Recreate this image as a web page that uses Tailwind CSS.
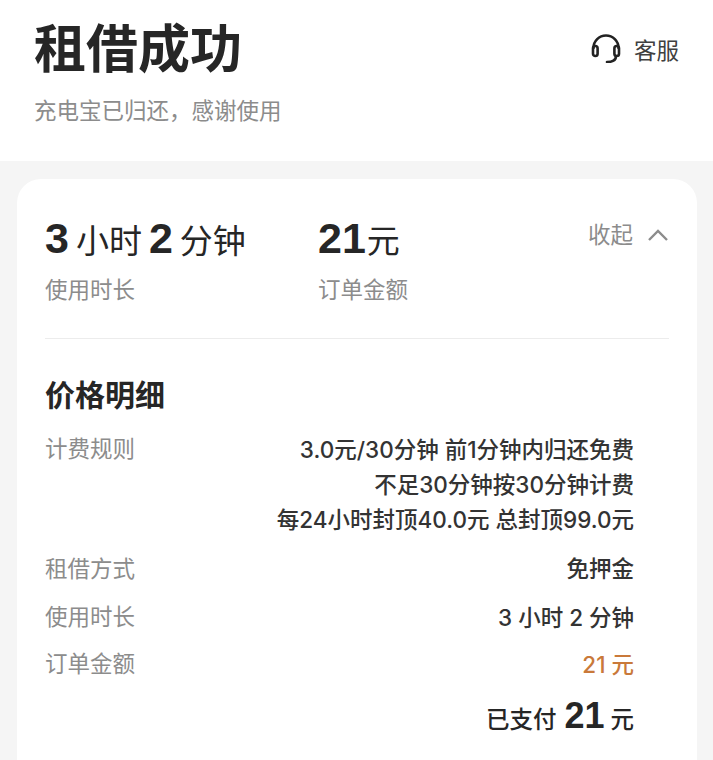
<!DOCTYPE html>
<html lang="zh-CN">
<head>
  <meta charset="UTF-8">
  <title>租借成功</title>
  <script src="https://cdn.jsdelivr.net/npm/@tailwindcss/browser@4"></script>
</head>
<body class="bg-[#f5f5f5] h-[760px] overflow-hidden font-['Liberation_Sans','Noto_Sans_CJK_SC',sans-serif]">
  <div class="bg-white h-[161px] px-[34px] pt-[17px] flex justify-between">
    <div>
      <h1 class="text-[52px] leading-[66px] font-bold text-[#262626]">租借成功</h1>
      <p class="text-[22.5px] leading-[30px] mt-[14px] text-[#8c8c8c]">充电宝已归还，感谢使用</p>
    </div>
    <div class="flex items-start gap-[13px] h-[36px] mt-[16px] text-[22.5px] leading-[38px] text-[#404040]">
      <svg class="w-[30px] h-[30px]" viewBox="0 0 30 30" fill="none" stroke="#222" stroke-width="2.6" stroke-linecap="round">
        <path d="M2.5 15a12.5 12.5 0 0 1 25 0"/>
        <rect x="2" y="13" width="4.6" height="10" rx="2.3"/>
        <rect x="23.4" y="13" width="4.6" height="10" rx="2.3"/>
        <path d="M25 23c0 4-2.500 6-9 6"/>
      </svg>
      <span>客服</span>
    </div>
  </div>

  <div class="bg-white rounded-t-[24px] ml-[17px] mr-[16px] mt-[18px] px-[28px] pt-[32px] h-[581px]">
    <div class="flex">
      <div class="w-[273px]">
        <div class="flex items-baseline text-[#262626] h-[54px] text-[33px] leading-[54px]">
          <b class="text-[43px]">3</b><span class="ml-[7px]">小时</span><b class="text-[43px] ml-[7px]">2</b><span class="ml-[7px]">分钟</span>
        </div>
        <div class="text-[22.5px] leading-[30px] mt-[11px] text-[#8c8c8c]">使用时长</div>
      </div>
      <div class="flex-1">
        <div class="flex items-baseline text-[#262626] h-[54px] text-[33px] leading-[54px]">
          <b class="text-[43px]">21</b><span class="ml-[1px]">元</span>
        </div>
        <div class="text-[22.5px] leading-[30px] mt-[11px] text-[#8c8c8c]">订单金额</div>
      </div>
      <div class="flex items-start gap-[15px] text-[22.5px] leading-[30px] text-[#8c8c8c] mr-[1px] mt-[10px]">
        <span>收起</span>
        <svg class="w-[20px] h-[12px] mt-[8px]" viewBox="0 0 20 12" fill="none" stroke="#8c8c8c" stroke-width="2.4"><path d="M1 11 10 2l9 9"/></svg>
      </div>
    </div>

    <div class="border-t border-[#ececec] mt-[32px] pt-[37px]">
      <h2 class="text-[30px] leading-[40px] font-bold text-[#262626]">价格明细</h2>
      <dl class="text-[22.5px] mt-[16px] pr-[35px]">
        <div class="flex justify-between">
          <dt class="text-[#8c8c8c] leading-[35px]">计费规则</dt>
          <dd class="text-right text-[#333] leading-[35px] font-medium font-['Inter','Noto_Sans_CJK_SC',sans-serif]">3.0元/30分钟 前1分钟内归还免费<br>不足30分钟按30分钟计费<br>每24小时封顶40.0元 总封顶99.0元</dd>
        </div>
        <div class="flex justify-between mt-[15px]">
          <dt class="text-[#8c8c8c] leading-[36px]">租借方式</dt>
          <dd class="text-[#333] leading-[36px] font-medium">免押金</dd>
        </div>
        <div class="flex justify-between mt-[12px]">
          <dt class="text-[#8c8c8c] leading-[36px]">使用时长</dt>
          <dd class="text-[#333] leading-[36px] font-medium font-['Inter','Noto_Sans_CJK_SC',sans-serif]">3 小时 2 分钟</dd>
        </div>
        <div class="flex justify-between mt-[11px]">
          <dt class="text-[#8c8c8c] leading-[36px]">订单金额</dt>
          <dd class="text-[#c9793a] leading-[36px] font-medium font-['Inter','Noto_Sans_CJK_SC',sans-serif]">21 元</dd>
        </div>
      </dl>
      <div class="flex justify-end items-baseline pr-[35px] mt-[11px] text-[#262626] text-[23.5px] leading-[44px] font-medium">
        <span>已支付</span><b class="text-[36px] ml-[8px]">21</b><span class="ml-[6px]">元</span>
      </div>
    </div>
  </div>
</body>
</html>
